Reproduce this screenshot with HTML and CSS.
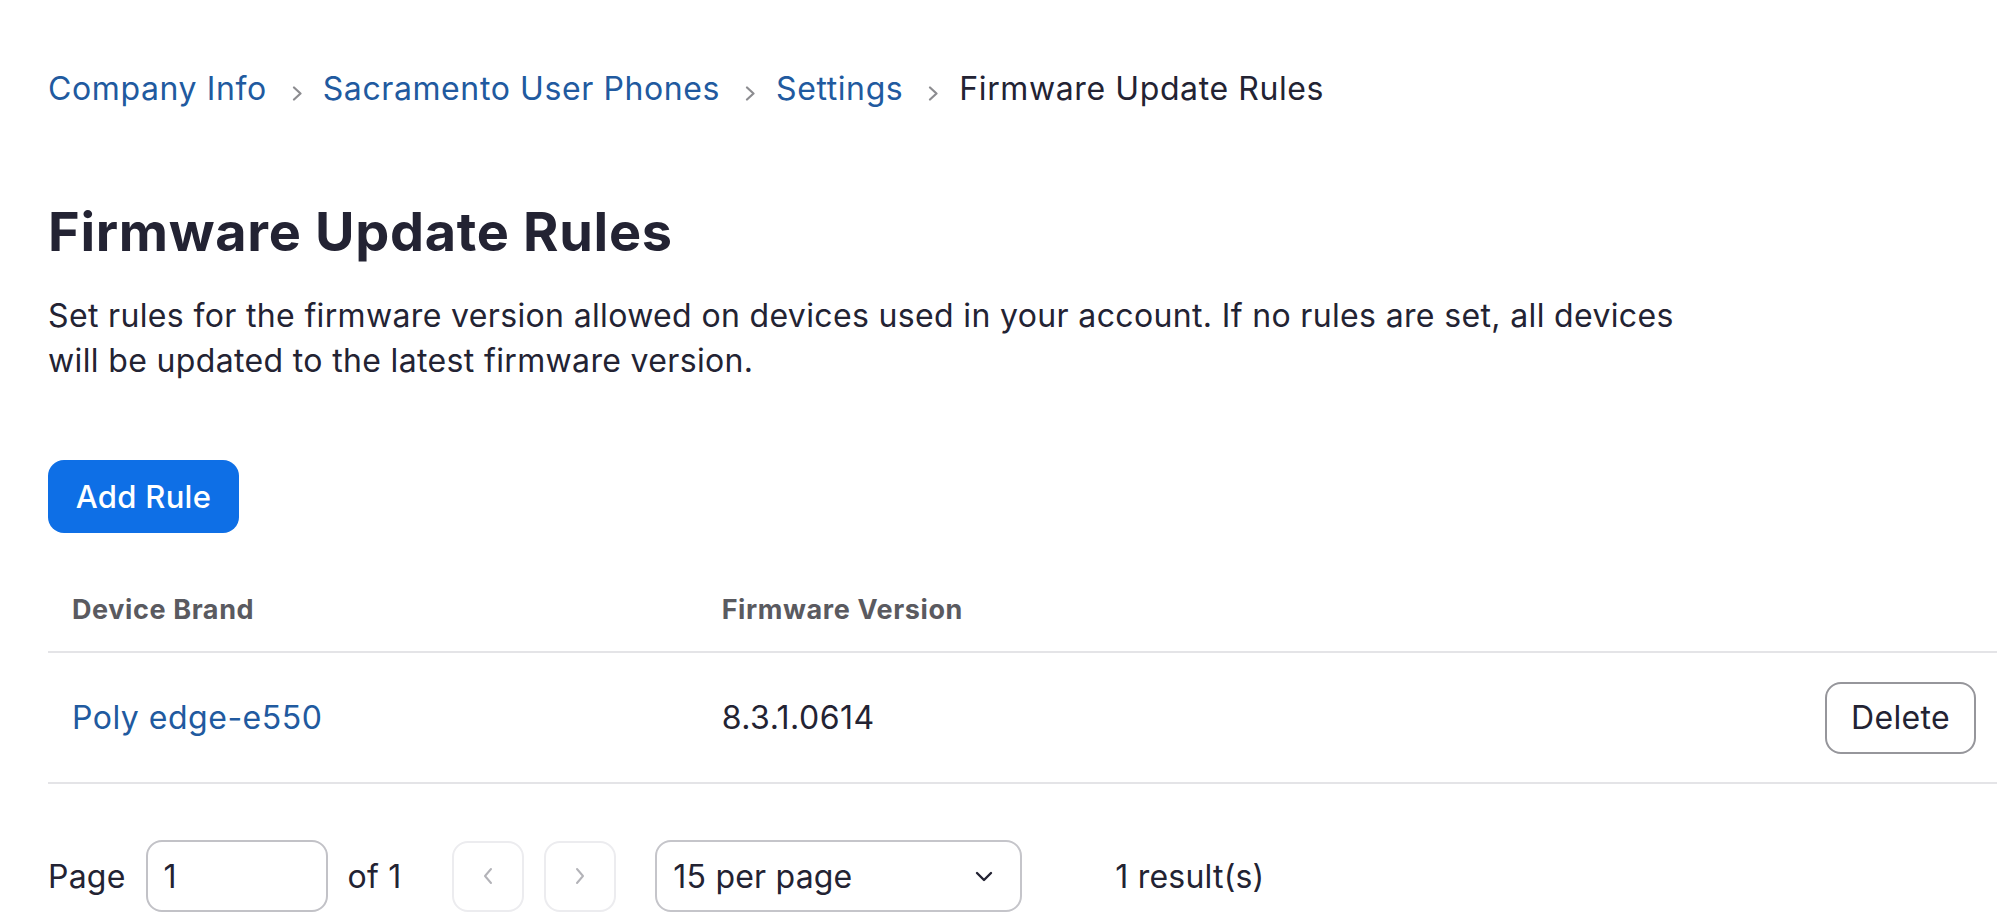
FILE: index.html
```html
<!DOCTYPE html>
<html lang="en">
<head>
<meta charset="utf-8">
<title>Firmware Update Rules</title>
<link rel="stylesheet" href="styles.css">
</head>
<body>
<main class="page">
  <nav class="crumbs">
    <a class="crumb-link" href="#">Company Info</a>
    <svg class="crumb-sep" width="11" height="15" viewBox="0 0 11 15"><path d="M2 1.5 L8.5 7.5 L2 13.5" fill="none" stroke="#8c8c90" stroke-width="2.2" stroke-linecap="round" stroke-linejoin="round"/></svg>
    <a class="crumb-link" href="#">Sacramento User Phones</a>
    <svg class="crumb-sep" width="11" height="15" viewBox="0 0 11 15"><path d="M2 1.5 L8.5 7.5 L2 13.5" fill="none" stroke="#8c8c90" stroke-width="2.2" stroke-linecap="round" stroke-linejoin="round"/></svg>
    <a class="crumb-link" href="#">Settings</a>
    <svg class="crumb-sep" width="11" height="15" viewBox="0 0 11 15"><path d="M2 1.5 L8.5 7.5 L2 13.5" fill="none" stroke="#8c8c90" stroke-width="2.2" stroke-linecap="round" stroke-linejoin="round"/></svg>
    <span class="crumb-current">Firmware Update Rules</span>
  </nav>

  <h1 class="title">Firmware Update Rules</h1>
  <p class="desc">Set rules for the firmware version allowed on devices used in your account. If no rules are set, all devices will be updated to the latest firmware version.</p>

  <button class="btn-primary" type="button">Add Rule</button>

  <div class="table">
    <div class="row head">
      <div class="cell">Device Brand</div>
      <div class="cell">Firmware Version</div>
      <div class="cell"></div>
    </div>
    <div class="row body-row">
      <div class="cell"><a class="link" href="#">Poly edge-e550</a></div>
      <div class="cell">8.3.1.0614</div>
      <div class="cell actions"><button class="btn-outline" type="button">Delete</button></div>
    </div>
  </div>

  <div class="pager">
    <span class="pager-label">Page</span>
    <input class="page-input" type="text" value="1">
    <span class="pager-label">of 1</span>
    <button class="nav-btn prev" type="button" aria-label="Previous page">
      <svg width="10" height="18" viewBox="0 0 10 18"><path d="M8 2 L2 9 L8 16" fill="none" stroke="#b3b3b8" stroke-width="2" stroke-linecap="round" stroke-linejoin="round"/></svg>
    </button>
    <button class="nav-btn" type="button" aria-label="Next page">
      <svg width="10" height="18" viewBox="0 0 10 18"><path d="M2 2 L8 9 L2 16" fill="none" stroke="#b3b3b8" stroke-width="2" stroke-linecap="round" stroke-linejoin="round"/></svg>
    </button>
    <div class="per-page">
      <span>15 per page</span>
      <svg width="18" height="11" viewBox="0 0 18 11"><path d="M2 2 L9 9 L16 2" fill="none" stroke="#232333" stroke-width="2.4" stroke-linecap="round" stroke-linejoin="round"/></svg>
    </div>
    <span class="results">1 result(s)</span>
  </div>
</main>
</body>
</html>
```
FILE: styles.css
```css
* { box-sizing: border-box; }

html, body {
  margin: 0;
  padding: 0;
  background: #ffffff;
}

body {
  font-family: Inter, "Noto Sans", "Liberation Sans", sans-serif;
  color: #232333;
  letter-spacing: 0.5px;
  overflow: hidden;
}

.page {
  padding: 65px 0 0 48px;
}

.crumbs {
  display: flex;
  align-items: center;
  height: 48px;
  font-size: 32px;
  line-height: 48px;
  letter-spacing: 0.6px;
}

.crumb-link {
  color: #215a9f;
  text-decoration: none;
}

.crumb-sep {
  margin: 8px 20px 0 25px;
  flex: none;
}

.crumb-current {
  color: #232333;
}

.title {
  margin: 85px 0 0;
  font-size: 54px;
  line-height: 68px;
  font-weight: 700;
  letter-spacing: 0.7px;
  color: #232333;
}

.desc {
  margin: 27px 0 0;
  font-size: 32px;
  line-height: 45px;
  letter-spacing: 0.35px;
  max-width: 1665px;
  color: #232333;
}

.btn-primary {
  display: block;
  margin-top: 77px;
  width: 191px;
  height: 73px;
  border: none;
  border-radius: 16px;
  background: #0e6fe6;
  color: #ffffff;
  font-family: inherit;
  font-size: 31px;
  font-weight: 500;
  letter-spacing: 0.3px;
  padding: 0;
}

.table {
  margin-top: 34px;
}

.row {
  display: grid;
  grid-template-columns: 1fr 1fr 1fr;
  border-bottom: 2px solid #e4e4e7;
}

.cell {
  display: flex;
  align-items: center;
  padding: 0 24px;
}

.head {
  height: 86px;
  font-size: 27px;
  font-weight: 700;
  letter-spacing: 0.6px;
  color: #5a5a60;
}

.body-row {
  height: 131px;
  font-size: 32px;
  color: #232333;
}

.link {
  color: #215a9f;
  text-decoration: none;
}

.actions {
  justify-content: flex-end;
  padding-right: 21px;
}

.btn-outline {
  width: 151px;
  height: 72px;
  border: 2px solid #96969b;
  border-radius: 16px;
  background: #ffffff;
  color: #232333;
  font-family: inherit;
  font-size: 32px;
  letter-spacing: 0.3px;
  padding: 0;
}

.pager {
  display: flex;
  align-items: center;
  gap: 20px;
  margin-top: 56px;
  height: 72px;
  font-size: 32px;
  letter-spacing: 0.2px;
}

.pager-label {
  color: #232333;
}

.page-input {
  width: 182px;
  height: 72px;
  border: 2px solid #c2c2c7;
  border-radius: 16px;
  padding: 0 16px;
  font-family: inherit;
  font-size: 32px;
  color: #232333;
  outline: none;
}

.nav-btn {
  width: 72px;
  height: 71px;
  border: 2px solid #ececef;
  border-radius: 16px;
  background: #ffffff;
  display: flex;
  align-items: center;
  justify-content: center;
  padding: 0;
}

.nav-btn.prev {
  margin-left: 31px;
}

.per-page {
  margin-left: 19px;
  width: 367px;
  height: 72px;
  border: 2px solid #c5c5ca;
  border-radius: 16px;
  display: flex;
  align-items: center;
  justify-content: space-between;
  padding: 0 27px 0 16px;
  color: #232333;
}

.results {
  margin-left: 73px;
  color: #232333;
}
```
